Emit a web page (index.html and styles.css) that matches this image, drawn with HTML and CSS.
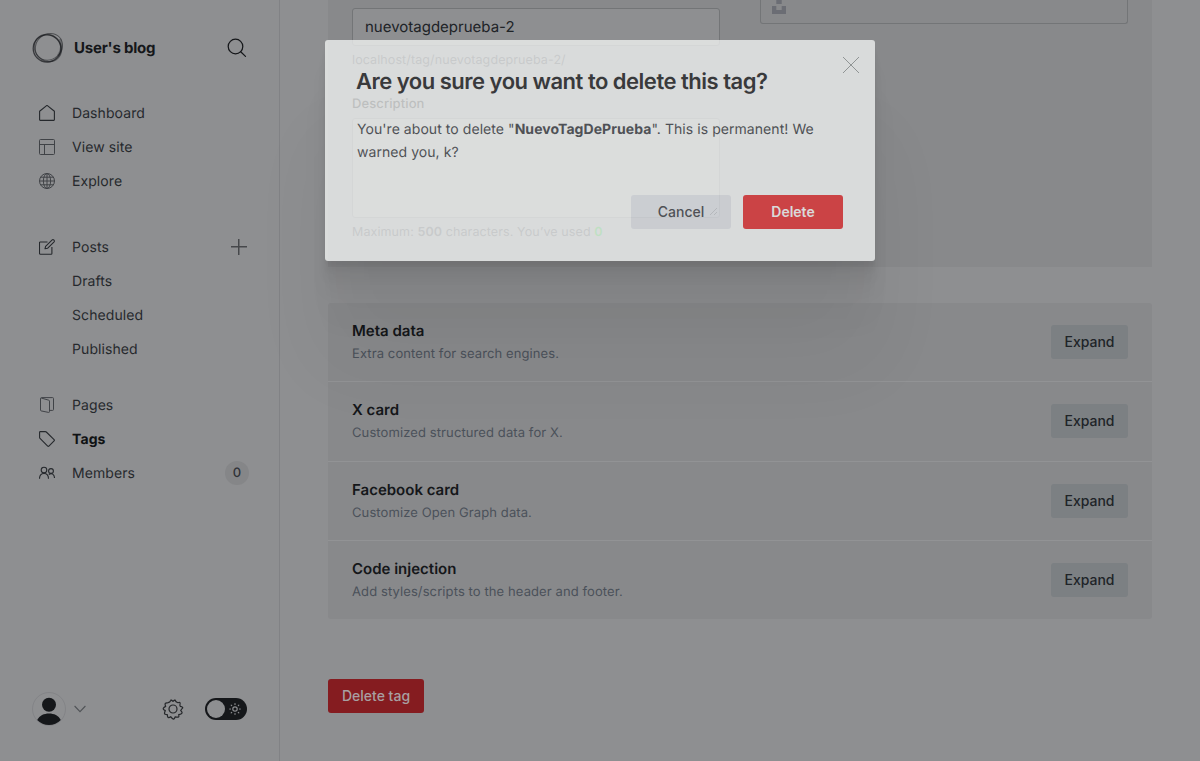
FILE: index.html
```html
<!DOCTYPE html>
<html lang="en">
<head>
<meta charset="utf-8">
<title>User's blog</title>
<link rel="stylesheet" href="styles.css">
</head>
<body>
<div class="app">
  <aside class="sidebar">
    <header class="brand">
      <svg class="logo" width="32" height="32" viewBox="0 0 32 32" fill="none" stroke="#1c1e21">
        <ellipse cx="15" cy="16.400" rx="13.800" ry="13.600" stroke-width="1.300" opacity=".75"/>
        <ellipse cx="17" cy="14.800" rx="14.300" ry="12.600" stroke-width="1" opacity=".55" transform="rotate(-42 17 15)"/>
        <ellipse cx="16" cy="16" rx="14.300" ry="13" stroke-width="1.200" opacity=".5" transform="rotate(48 16 16)"/>
        <path d="M28 7c2.500 6 1.500 12-2 17" stroke-width="2.600" opacity=".3"/>
      </svg>
      <span class="brand-name">User's blog</span>
      <svg class="search" width="20" height="20" viewBox="0 0 20 20" fill="none" stroke="#15171a" stroke-width="1.25" stroke-linecap="round"><circle cx="8.5" cy="8.5" r="7.3"/><path d="M13.7 13.7l4.8 4.7"/></svg>
    </header>
    <nav class="nav">
      <div class="group">
        <a class="item"><svg viewBox="0 0 16 16"><path d="M.6 6.2v8.6c0 .4.2.6.6.6h13.6c.4 0 .6-.2.6-.6V6.2L8.4.6q-.4-.3-.8 0z"/></svg>Dashboard</a>
        <a class="item dim"><svg viewBox="0 0 16 16"><rect x=".5" y=".5" width="15" height="15" rx="1"/><path d="M.5 5.5h15M5.5 5.500v10"/></svg>View site</a>
        <a class="item dim"><svg viewBox="0 0 16 16"><circle cx="8" cy="8" r="7.5"/><ellipse cx="8" cy="8" rx="3.6" ry="7.500"/><path d="M.5 8h15M8 .5v15M1.700 4.200h12.600M1.700 11.800h12.600"/></svg>Explore</a>
      </div>
      <div class="group posts">
        <a class="item"><svg viewBox="0 0 16 16"><path d="M8.500 3H1.200q-.7 0-.7.7v10.600q0 .9.900.9h10.700q.8 0 .8-.8V8M6 9.800l.6-2.400 6.600-6.500q.7-.6 1.700.1.900 1 .2 1.800L8.500 9.300z"/></svg>Posts<span class="plus"></span></a>
        <a class="item sub">Drafts</a>
        <a class="item sub">Scheduled</a>
        <a class="item sub">Published</a>
      </div>
      <div class="group">
        <a class="item dim"><svg viewBox="0 0 16 16"><path d="M1.500 1.200v11.900q0 .6.600.800l7.400 1.500q1 .2 1-.8V4.100q0-.7-.7-.9L2.500 1.100Q1.500.9 1.500 1.200zM2.300.6h11.300q.9 0 .9.900v11q0 .9-.9.900h-3"/></svg>Pages</a>
        <a class="item active"><svg viewBox="0 0 16 16"><path d="M1.300.6h5q.6 0 1 .4l7.800 7.600q.6.600 0 1.200l-5.200 5.300q-.6.600-1.200 0L1 7.400q-.4-.4-.4-1V1.300q0-.7.700-.7z"/></svg>Tags</a>
        <a class="item"><svg viewBox="0 0 16 16"><circle cx="5" cy="5.100" r="2.800"/><circle cx="12" cy="6" r="2.400"/><path d="M.5 13.800c0-3.300 1.900-5.300 4.500-5.300s4.500 2 4.500 5.300M9.800 9.500c2.900-2.200 5.700 0 5.700 3.600"/></svg>Members<span class="count">0</span></a>
      </div>
    </nav>
    <footer class="foot">
      <svg width="34" height="34" viewBox="0 0 34 34"><circle cx="17" cy="17" r="16.500" fill="none" stroke="#838487"/><circle cx="17" cy="12.700" r="7" fill="#15171a"/><path d="M5.200 28C7.500 23.500 12 21.500 17 21.500s9.500 2 11.800 6.500A16.500 16.500 0 0 1 17 33 16.500 16.500 0 0 1 5.200 28z" fill="#15171a"/></svg>
      <svg class="chev" width="12" height="8" viewBox="0 0 12 8" fill="none" stroke="#505357" stroke-width="1.100"><path d="M.6 1L6 6.600 11.400 1"/></svg>
      <svg class="gear" width="22" height="22" viewBox="0 0 22 22" fill="none" stroke="#25272a" stroke-width="1.200" stroke-linejoin="round"><circle cx="11" cy="11" r="4"/><path d="M8.700 2.500Q9 1.200 11 3.400 13 1.200 13.300 2.500T15.900 4.700Q18.600 3.800 18.100 5.700T18.300 8.400Q21.500 9.200 20.500 10.200T18.700 12.600Q20.800 14.600 19.700 15.400T16.700 16.600Q17.400 19.400 15.900 19.200T13.200 18.800Q12.300 21.600 11 20.900T8.700 18.700Q6.300 20.300 5.800 19.100T5.300 16.600Q2.400 16.500 2.500 15.200T3.300 12.600Q.6 11.200 1.400 10.100T3.700 8.400Q2.400 5.500 3.800 5.200T6.100 4.700Q8 4.200 8.700 2.500z"/></svg>
      <span class="toggle"><span class="knob"></span>
        <svg width="12" height="12" viewBox="0 0 12 12" fill="none" stroke="#8b8c8f" stroke-width="1.200" stroke-linecap="round"><circle cx="6" cy="6" r="2.200"/><path d="M6 .7v.8M6 10.500v.8M.7 6h.8M10.500 6h.8M2.200 2.200l.5.5M9.300 9.300l.5.500M2.200 9.800l.5-.5M9.300 2.700l.5-.5"/></svg>
      </span>
    </footer>
  </aside>
  <main class="main">
    <section class="card form">
      <div class="col">
        <div class="input">nuevotagdeprueba-2</div>
        <p class="hint url">localhost/tag/nuevotagdeprueba-2/</p>
        <p class="label">Description</p>
        <div class="area"><svg width="9" height="9" viewBox="0 0 9 9" stroke="#35373a" fill="none" stroke-width="1"><path d="M1 8l7-7M5 8l3-3"/></svg></div>
        <p class="hint">Maximum: <b>500</b> characters. You’ve used <b class="used">0</b></p>
      </div>
      <div class="picture"><svg width="14" height="14" viewBox="0 0 14 14" fill="#6b6d74"><path d="M4.300 0h5.400v4H4.300zM0 6h4.300v4h5.400V6H14v8H0z"/></svg></div>
    </section>
    <section class="card rows">
      <div class="row"><div class="text"><h4>Meta data</h4><p>Extra content for search engines.</p></div><button class="btn expand">Expand</button></div>
      <div class="row"><div class="text"><h4>X card</h4><p>Customized structured data for X.</p></div><button class="btn expand">Expand</button></div>
      <div class="row"><div class="text"><h4>Facebook card</h4><p>Customize Open Graph data.</p></div><button class="btn expand">Expand</button></div>
      <div class="row"><div class="text"><h4>Code injection</h4><p>Add styles/scripts to the header and footer.</p></div><button class="btn expand">Expand</button></div>
    </section>
    <button class="btn delete-tag">Delete tag</button>
  </main>
</div>
<div class="modal">
  <svg class="close" width="16" height="16" viewBox="0 0 16 16" stroke="#888c8c" stroke-width=".9"><path d="M0 0l16 16M16 0L0 16"/></svg>
  <h1>Are you sure you want to delete this tag?</h1>
  <p>You're about to delete "<b>NuevoTagDePrueba</b>". This is permanent! We warned you, k?</p>
  <div class="actions"><button class="btn cancel">Cancel</button><button class="btn confirm">Delete</button></div>
</div>
</body>
</html>
```
FILE: styles.css
```css
* { box-sizing: border-box; }
body, h1, h4, p { margin: 0; }
body {
  height: 761px;
  overflow: hidden;
  background: #8e8f91;
  color: #15171a;
  font-family: Inter, sans-serif;
  font-size: 14px;
  text-rendering: geometricPrecision;
}
svg { display: block; flex: none; }
.app { display: flex; height: 761px; }

.sidebar {
  width: 280px;
  flex: none;
  display: flex;
  flex-direction: column;
  padding: 32px 32px 35px;
  border-right: 1px solid #818285;
}
.brand { display: flex; align-items: center; height: 32px; }
.brand-name { margin-left: 10px; padding-bottom: 1px; font-size: 15px; font-weight: 700; letter-spacing: -.2px; }
.search { margin-left: auto; }
.nav { margin-top: 32px; }
.group { margin-bottom: 32px; }
.group.posts { margin-bottom: 22px; }
.item {
  display: flex;
  align-items: center;
  height: 34px;
  padding-left: 7px;
  line-height: 34px;
  padding-top: 1px;
  color: #26292d;
  letter-spacing: .08px;
}
.item svg { margin-top: -1px; width: 16px; height: 16px; margin-right: 17px; fill: none; stroke: #25282c; stroke-width: 1.1; stroke-linejoin: round; }
.item.dim svg { stroke: #404347; stroke-width: 1; }
.item.sub { padding-left: 40px; }
.item.active { color: #101214; font-weight: 700; letter-spacing: 0.1px; }
.plus {
  width: 16px;
  height: 16px;
  margin: -1px 0 0 auto;
  background: linear-gradient(#46484b, #46484b) center / 16px 1.5px no-repeat, linear-gradient(#46484b, #46484b) center / 1.5px 16px no-repeat;
}
.count {
  width: 24px;
  height: 24px;
  margin: -1px -2px 0 auto;
  border-radius: 12px;
  background: #858688;
  color: #303338;
  text-align: center;
  font-size: 13px;
  font-weight: 500;
  line-height: 24px;
}
.foot { display: flex; align-items: center; margin-top: auto; }
.chev { margin-left: 8px; }
.gear { margin-left: auto; }
.toggle { display: flex; align-items: center; width: 42px; height: 22px; margin-left: 21px; padding: 0 6px 0 2px; border-radius: 11px; background: #15171a; justify-content: space-between; }
.knob { width: 18px; height: 18px; border-radius: 50%; background: #8e8f91; }

.main { flex: 1; padding: 0 48px; }
.card { background: #88898b; }
.form { display: grid; grid-template-columns: 368px 368px; column-gap: 40px; height: 267px; padding: 0 24px; align-items: start; }
.col { padding-top: 8px; }
.input { height: 38px; padding: 0 12px; border: 1px solid #737577; border-radius: 3px; background: #8e8f91; font-size: 15px; line-height: 36px; letter-spacing: 0; color: #202327; }
.hint { height: 20px; font-size: 12.5px; line-height: 21px; letter-spacing: .1px; color: #41444c; white-space: nowrap; }
.hint.url { margin-top: 4px; }
.hint b { font-weight: 600; }
.hint .used { color: #1f9a2c; }
.label { margin-top: 24px; height: 20px; font-size: 13px; font-weight: 500; line-height: 20px; letter-spacing: .1px; }
.area { display: flex; justify-content: flex-end; align-items: flex-end; height: 100px; margin: 4px 0; padding: 1px; border: 1px solid #737577; border-radius: 3px; background: #8e8f91; }
.picture { height: 24px; padding: 0 11px; border: 1px solid #737577; border-top: 0; border-radius: 0 0 3px 3px; }

.rows { margin-top: 36px; border-radius: 3px; }
.row { display: flex; align-items: center; justify-content: space-between; height: 79.250px; padding: 0 24px; border-bottom: 1px solid #929395; }
.row:last-child { height: 78.250px; border: 0; }
.text { padding-top: 1px; }
.row h4 { font-size: 15px; font-weight: 600; line-height: 20px; letter-spacing: 0; }
.row p { margin-top: 3px; font-size: 13px; line-height: 20px; letter-spacing: .1px; color: #4b515a; }
.btn { height: 34px; padding: 0; border: 0; border-radius: 3px; font: 500 14px/34px Inter, sans-serif; letter-spacing: 0; }
.expand { width: 77px; background: #7c8083; color: #202428; }
.delete-tag { display: block; width: 96px; margin-top: 60px; background: #851c20; color: #a8a0a2; }

.modal {
  position: absolute;
  left: 325px;
  top: 40px;
  width: 550px;
  height: 221px;
  padding: 27px 32px 32px;
  border-radius: 3px;
  background: #f5f7f6;
  opacity: .75;
  box-shadow: 0 3.8px 2.2px rgba(0,0,0,.028), 0 9.2px 5.3px rgba(0,0,0,.035), 0 17.3px 10px rgba(0,0,0,.04), 0 30.8px 17.9px rgba(0,0,0,.04), 0 57.7px 33.4px rgba(0,0,0,.03), 0 100px 80px rgba(0,0,0,.06);
}
.close { position: absolute; right: 16px; top: 17px; }
.modal h1 { margin-left: -1px; font-size: 22px; font-weight: 600; line-height: 31px; letter-spacing: -.5px; color: #1e2022; }
.modal p { margin-top: 20px; font-size: 14px; line-height: 23px; letter-spacing: .06px; color: #3a3d43; }
.actions { display: flex; justify-content: flex-end; gap: 12px; margin-top: 31px; }
.actions .btn { width: 100px; }
.cancel { background: #e0e3e8; color: #3a3d43; }
.confirm { background: #e22c2e; color: #f5f5f5; font-weight: 600; }
```
